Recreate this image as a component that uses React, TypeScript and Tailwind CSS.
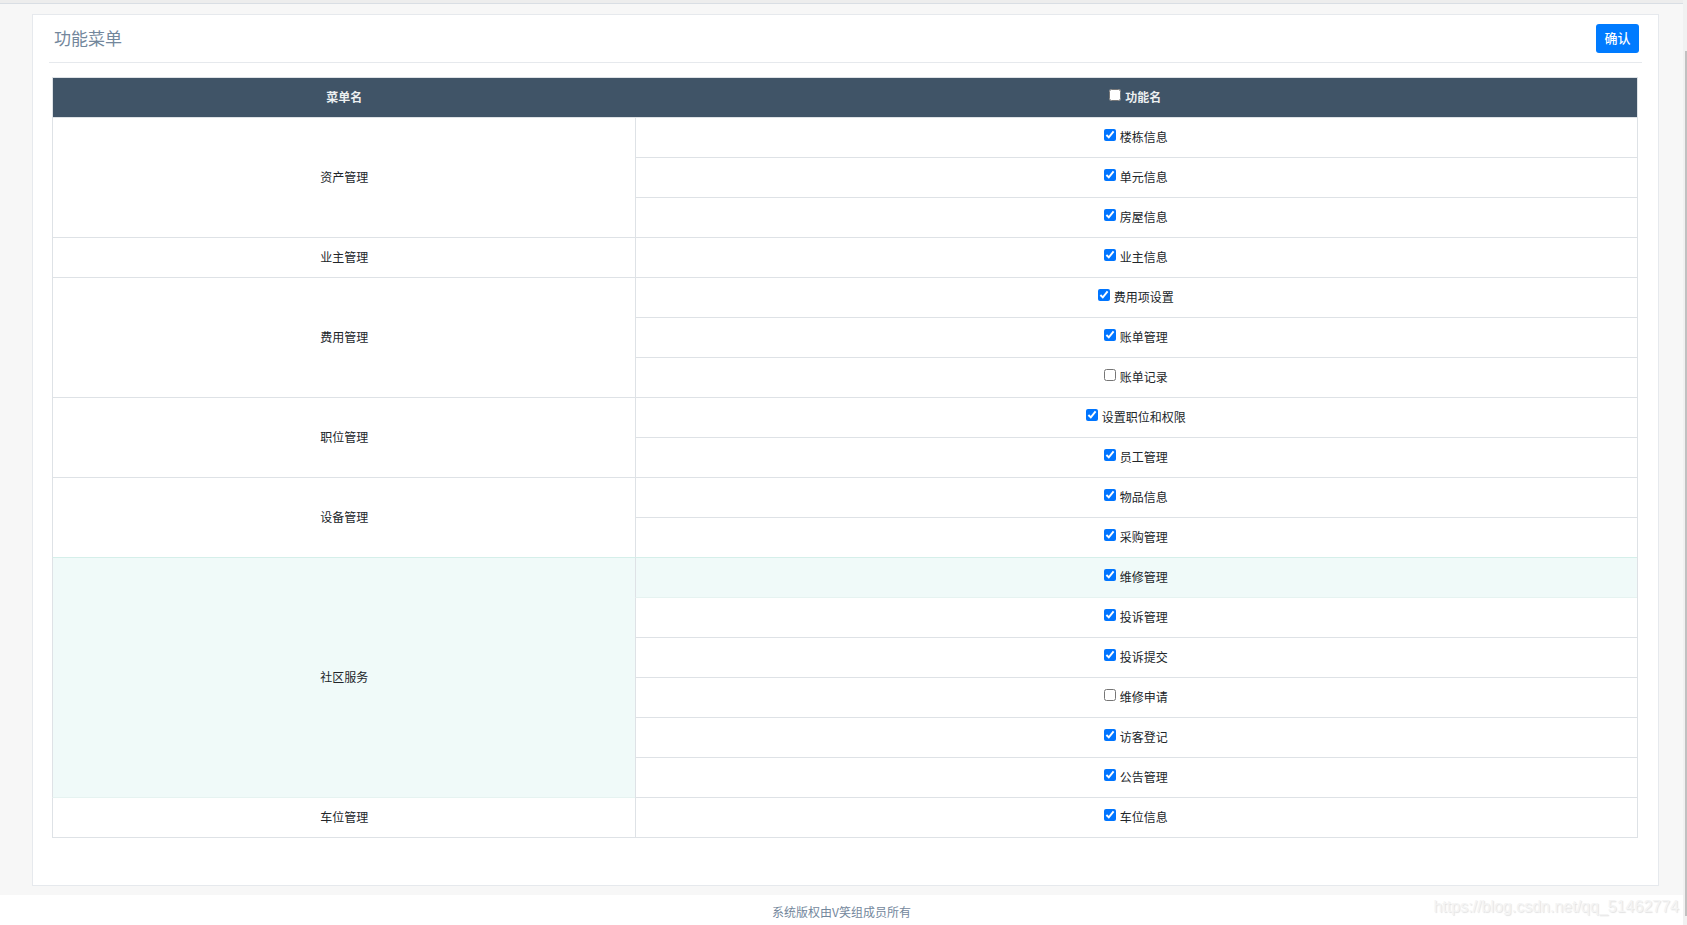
import { FC, useState } from 'react';

interface MenuItem {
  name: string;
  checked: boolean;
}

interface MenuGroup {
  name: string;
  items: MenuItem[];
}

const groups: MenuGroup[] = [
  {
    name: '资产管理',
    items: [
      { name: '楼栋信息', checked: true },
      { name: '单元信息', checked: true },
      { name: '房屋信息', checked: true },
    ],
  },
  { name: '业主管理', items: [{ name: '业主信息', checked: true }] },
  {
    name: '费用管理',
    items: [
      { name: '费用项设置', checked: true },
      { name: '账单管理', checked: true },
      { name: '账单记录', checked: false },
    ],
  },
  {
    name: '职位管理',
    items: [
      { name: '设置职位和权限', checked: true },
      { name: '员工管理', checked: true },
    ],
  },
  {
    name: '设备管理',
    items: [
      { name: '物品信息', checked: true },
      { name: '采购管理', checked: true },
    ],
  },
  {
    name: '社区服务',
    items: [
      { name: '维修管理', checked: true },
      { name: '投诉管理', checked: true },
      { name: '投诉提交', checked: true },
      { name: '维修申请', checked: false },
      { name: '访客登记', checked: true },
      { name: '公告管理', checked: true },
    ],
  },
  { name: '车位管理', items: [{ name: '车位信息', checked: true }] },
];

const allItems = groups.flatMap((g) => g.items);

// row under the pointer
const activeItem = '维修管理';

interface CheckProps {
  label: string;
  checked: boolean;
  onChange: (value: boolean) => void;
}

const Check: FC<CheckProps> = ({ label, checked, onChange }) => (
  <label className="inline-flex items-start gap-1 align-middle">
    <input
      type="checkbox"
      checked={checked}
      onChange={(e) => onChange(e.target.checked)}
      className="mt-px h-3 w-3 accent-[#0075ff]"
    />
    <span>{label}</span>
  </label>
);

const cellClass = (active: boolean, afterActive: boolean) => {
  if (active) return 'border-t-[#d5efea] border-l-[#dee2e6] bg-[#f0faf9]';
  if (afterActive) return 'border-t-[#e6f3f1] border-l-[#dee2e6]';
  return 'border-[#dee2e6]';
};

const MenuTable: FC = () => {
  const [all, setAll] = useState(false);
  const [selected, setSelected] = useState<string[]>(
    allItems.filter((i) => i.checked).map((i) => i.name)
  );

  const toggleAll = (value: boolean) => {
    setAll(value);
    setSelected(value ? allItems.map((i) => i.name) : []);
  };

  const toggle = (name: string, value: boolean) => {
    setSelected(value ? [...selected, name] : selected.filter((n) => n !== name));
  };

  const isActive = (group?: MenuGroup) =>
    !!group && group.items.some((item) => item.name === activeItem);

  return (
    <table className="w-full table-fixed border-separate border-spacing-0 border-r border-b border-[#dee2e6] text-center text-[12px] leading-[18px] text-[#212529]">
      <colgroup>
        <col className="w-[36.8%]" />
        <col />
      </colgroup>
      <thead>
        <tr className="h-10 bg-[#405467] text-[#ecf0f1]">
          <th className="border-t border-l border-[#dee2e6] pb-0.5 font-bold">菜单名</th>
          <th className="border-t border-[#dee2e6] pr-0.5 pb-[3px] font-bold">
            <Check label="功能名" checked={all} onChange={toggleAll} />
          </th>
        </tr>
      </thead>
      <tbody>
        {groups.map((group, g) =>
          group.items.map((item, i) => (
            <tr key={item.name} className="h-10">
              {i === 0 && (
                <td
                  rowSpan={group.items.length}
                  className={`border-t border-l pb-0.5 ${cellClass(
                    isActive(group),
                    isActive(groups[g - 1])
                  )}`}
                >
                  {group.name}
                </td>
              )}
              <td
                className={`border-t border-l pr-0.5 pb-[3px] ${cellClass(
                  item.name === activeItem,
                  i > 0 && group.items[i - 1].name === activeItem
                )}`}
              >
                <Check
                  label={item.name}
                  checked={selected.includes(item.name)}
                  onChange={(value) => toggle(item.name, value)}
                />
              </td>
            </tr>
          ))
        )}
      </tbody>
    </table>
  );
};

const App: FC = () => {
  return (
    <div className="relative flex min-h-screen bg-white font-['Noto_Sans_CJK_SC',sans-serif]">
      <div className="flex min-w-0 flex-1 flex-col">
        <div className="h-1 border-b border-[#d9dee4] bg-[#ededed]"></div>
        <main className="bg-[#f7f7f7] pt-2.5 pr-6 pb-[9px] pl-8">
          <section className="border border-[#e6e9ed] bg-white px-4 pb-[47px]">
            <div className="flex h-12 items-start justify-between border-b border-[#e6e9ed] pr-[3px] pl-[5px]">
              <h2 className="pt-[11px] text-[17px] leading-6 text-[#73879c]">功能菜单</h2>
              <button
                type="button"
                className="mt-[9px] h-[29px] w-[43px] rounded-[3px] bg-[#007bff] pb-0.5 text-[13px] font-medium text-white"
              >
                确认
              </button>
            </div>
            <div className="pt-3.5 pr-1 pl-[3px]">
              <MenuTable />
            </div>
          </section>
        </main>
        <footer className="pt-2 text-center text-[12px] leading-[18px] text-[#73879c]">
          系统版权由V笑组成员所有
        </footer>
      </div>
      <div className="flex w-1 flex-col items-end bg-[#f1f1f1] pt-[51px] pb-[9px]">
        <div className="w-0.5 flex-1 bg-[#c1c1c1]"></div>
      </div>
      <span className="absolute right-2 bottom-1.5 font-['Liberation_Sans',sans-serif] text-[16px] leading-6 text-[#f4f4f4] [text-shadow:1px_1px_1px_#e2e2e2]">
        https://blog.csdn.net/qq_51462774
      </span>
    </div>
  );
};

export default App;
